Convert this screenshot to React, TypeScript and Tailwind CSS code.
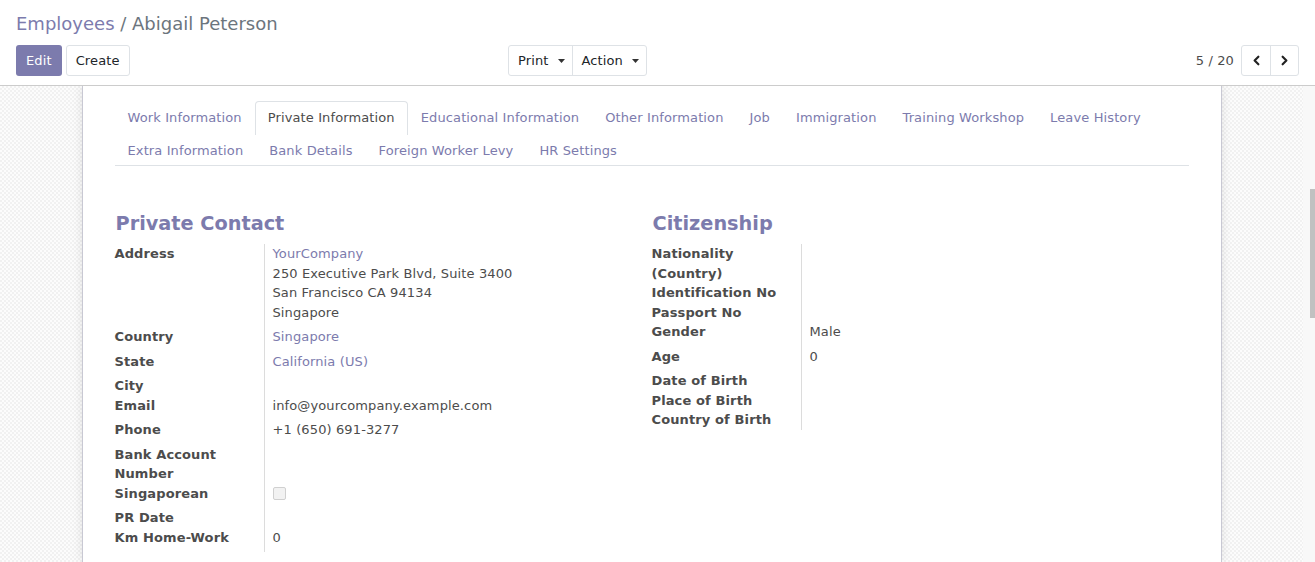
import React from "react";
import { ChevronLeft, ChevronRight } from "lucide-react";

const Caret = () => (
  <svg width="7" height="4" viewBox="0 0 7 4" className="ml-[9px] inline-block">
    <path d="M0 0 L7 0 L3.5 4 Z" fill="#333" />
  </svg>
);

const tabsRow1 = [
  "Work Information",
  "Private Information",
  "Educational Information",
  "Other Information",
  "Job",
  "Immigration",
  "Training Workshop",
  "Leave History",
];
const tabsRow2 = ["Extra Information", "Bank Details", "Foreign Worker Levy", "HR Settings"];

type Row = { label: string; value?: React.ReactNode; hasValue?: boolean };

function Field({ rows }: { rows: Row[] }) {
  return (
    <div className="grid grid-cols-[150px_1fr]">
      {rows.map((r, i) => (
        <React.Fragment key={i}>
          <div className="border-r border-[#dcdcdc] pr-[4px] font-bold text-[#4c4c4c] leading-[19.5px]">
            {r.label}
          </div>
          <div className="pl-[8px] leading-[19.5px] text-[#4c4c4c]">
            {r.hasValue ? <div className="mb-[5px]">{r.value}</div> : null}
          </div>
        </React.Fragment>
      ))}
    </div>
  );
}

export default function App() {
  const purple = "text-[#7C7BAD]";
  const left: Row[] = [
    {
      label: "Address",
      hasValue: true,
      value: (
        <div>
          <div className={purple}>YourCompany</div>
          <div>250 Executive Park Blvd, Suite 3400</div>
          <div>San Francisco CA 94134</div>
          <div>Singapore</div>
        </div>
      ),
    },
    { label: "Country", hasValue: true, value: <span className={purple}>Singapore</span> },
    { label: "State", hasValue: true, value: <span className={purple}>California (US)</span> },
    { label: "City" },
    { label: "Email", hasValue: true, value: "info@yourcompany.example.com" },
    { label: "Phone", hasValue: true, value: "+1 (650) 691-3277" },
    { label: "Bank Account Number" },
    {
      label: "Singaporean",
      hasValue: true,
      value: (
        <div className="flex h-[19.5px] items-center">
          <div className="h-[13px] w-[13px] rounded-[2px] border border-[#d0d0d0] bg-[#f2f2f2]" />
        </div>
      ),
    },
    { label: "PR Date" },
    { label: "Km Home-Work", hasValue: true, value: "0" },
  ];
  const right: Row[] = [
    { label: "Nationality (Country)" },
    { label: "Identification No" },
    { label: "Passport No" },
    { label: "Gender", hasValue: true, value: "Male" },
    { label: "Age", hasValue: true, value: "0" },
    { label: "Date of Birth" },
    { label: "Place of Birth" },
    { label: "Country of Birth" },
  ];

  return (
    <div className="flex h-[562px] w-[1315px] flex-col overflow-hidden bg-white font-['DejaVu_Sans',sans-serif] text-[13px] tracking-[0.12px] text-[#4c4c4c]">
      {/* Control panel */}
      <div className="border-b border-[#cccccc] px-[16px] pt-[10px] pb-[9px]">
        <div className="h-[27px] text-[18px] leading-[27px] tracking-normal">
          <span className="text-[#7C7BAD]">Employees</span>
          <span className="text-[#6c757d]"> / Abigail Peterson</span>
        </div>
        <div className="mt-[7px] flex h-[32px] items-center">
          <div className="flex w-[492px] gap-[4px]">
            <button className="h-[31px] rounded-[3px] bg-[#7C7BAD] px-[10px] pt-[1px] text-white">Edit</button>
            <button className="h-[31px] rounded-[3px] border border-[#dee2e6] bg-white px-[9px] pt-[1px] text-[#212529]">
              Create
            </button>
          </div>
          <div className="flex h-[31px] rounded-[3px] border border-[#dee2e6]">
            <button className="flex items-center pt-[1px] pl-[9px] pr-[7px] text-[#212529]">
              Print
              <Caret />
            </button>
            <button className="flex items-center border-l border-[#dee2e6] pt-[1px] pl-[9px] pr-[7px] text-[#212529]">
              Action
              <Caret />
            </button>
          </div>
          <div className="ml-auto flex items-center">
            <span className="mr-[7px] pt-[1px] text-[#4c4c4c]">5 / 20</span>
            <div className="flex h-[31px] rounded-[3px] border border-[#dee2e6]">
              <button className="flex w-[28px] items-center justify-center">
                <ChevronLeft size={15} strokeWidth={3.5} color="#222" />
              </button>
              <button className="flex w-[28px] items-center justify-center border-l border-[#dee2e6]">
                <ChevronRight size={15} strokeWidth={3.5} color="#222" />
              </button>
            </div>
          </div>
        </div>
      </div>

      {/* Content */}
      <div className="flex min-h-0 flex-1">
        <div className="min-w-0 flex-1 overflow-hidden bg-[repeating-conic-gradient(#f1f1f1_0_25%,#fcfcfc_0_50%)] bg-[length:4px_4px]">
          <div className="mx-auto h-full w-[1140px] border-x border-[#c8c8d3] bg-white px-[32px] pt-[15px] shadow-[0_0_10px_rgba(0,0,0,0.1)]">
            {/* Tabs */}
            <div className="border-b border-[#dee2e6]">
              <div className="flex">
                {tabsRow1.map((t) => {
                  const active = t === "Private Information";
                  return (
                    <div
                      key={t}
                      className={
                        active
                          ? "mb-[-1px] h-[34px] rounded-t-[4px] border border-b-0 border-[#dee2e6] bg-white px-[12px] leading-[32px] text-[#4c4c4c]"
                          : "h-[33px] border border-transparent px-[12px] leading-[32px] text-[#7C7BAD]"
                      }
                    >
                      {t}
                    </div>
                  );
                })}
              </div>
              <div className="flex">
                {tabsRow2.map((t) => (
                  <div
                    key={t}
                    className="h-[31px] border border-transparent px-[12px] leading-[32px] text-[#7C7BAD]"
                  >
                    {t}
                  </div>
                ))}
              </div>
            </div>

            {/* Groups */}
            <div className="mt-[46px] grid grid-cols-2">
              <div>
                <div className="mb-[8px] ml-[1px] h-[24px] text-[19.3px] font-bold leading-[24px] tracking-normal text-[#7C7BAD]">
                  Private Contact
                </div>
                <Field rows={left} />
              </div>
              <div>
                <div className="mb-[8px] ml-[1px] h-[24px] text-[19.3px] font-bold leading-[24px] tracking-normal text-[#7C7BAD]">
                  Citizenship
                </div>
                <Field rows={right} />
              </div>
            </div>
          </div>
        </div>
        {/* Scrollbar */}
        <div className="flex w-[12px] flex-col items-end bg-[#f8f8f8] pt-[103px]">
          <div className="h-[129px] w-[5px] bg-[#c1c1c1]" />
        </div>
      </div>
    </div>
  );
}
